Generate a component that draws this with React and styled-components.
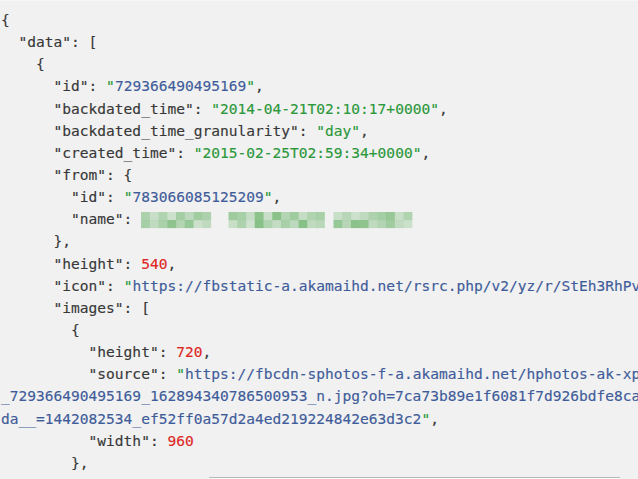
import React from "react"
import styled, { createGlobalStyle } from "styled-components"

const Global = createGlobalStyle`
  html, body {
    margin: 0;
    padding: 0;
    background: #f1f1f1;
  }
  #root {
    width: 638px;
    height: 479px;
  }
`

export const Viewer = styled.main`
  position: relative;
  width: 638px;
  height: 479px;
  overflow: hidden;
  background: #f1f1f1;
  border-top: 1px solid #f7f7f7;
  box-sizing: border-box;
  padding: 8px 0 0 1px;
  font-family: "DejaVu Sans Mono", "Liberation Mono", monospace;
  font-size: 14.55px;
  line-height: 22.15px;
  color: #383838;
  -webkit-text-stroke: 0.15px currentColor;
`

export const Line = styled.div`
  white-space: pre;
  height: 22.15px;
`

export const Str = styled.span`
  color: ${props => (props.blue ? "#3f5c9a" : "#2b983a")};
`

export const Q = styled.span`
  color: #2b983a;
`

export const Num = styled.span`
  color: #de2724;
`

export const Blur = styled.svg`
  display: inline-block;
  vertical-align: -5px;
  width: 272px;
  height: 18px;
`

export const ScrollEdge = styled.div`
  position: absolute;
  left: 209px;
  right: 18px;
  bottom: 1px;
  height: 1px;
  background: #b9b9b9;
  box-shadow: 0 1px 0 #fbfbfb;
`

// pixelated (redacted) name
const cells = (() => {
  const out = []
  let seed = 7
  const rnd = () => {
    seed = (seed * 9301 + 49297) % 233280
    return seed / 233280
  }
  const segments = [
    [0, 8],
    [10, 21],
    [22, 31],
  ]
  segments.forEach(([a, b]) => {
    for (let c = a; c < b; c++) {
      for (let r = 0; r < 2; r++) {
        out.push({ x: c * 8.75, y: r * 8, o: 0.2 + rnd() * 0.5 })
      }
    }
  })
  return out
})()

function BlurredName() {
  return (
    <Blur viewBox="0 0 272 18">
      {cells.map((c, i) => (
        <rect key={i} x={c.x} y={c.y + 1} width="8.85" height="8.1" fill="#58ab58" opacity={c.o} />
      ))}
    </Blur>
  )
}

const S = ({ children, blue }) =>
  blue ? (
    <>
      <Q>"</Q>
      <Str blue>{children}</Str>
      <Q>"</Q>
    </>
  ) : (
    <Str>"{children}"</Str>
  )

export default function App() {
  return (
    <>
      <Global />
      <Viewer>
        <Line>{"{"}</Line>
        <Line>{'  "data": ['}</Line>
        <Line>{"    {"}</Line>
        <Line>
          {'      "id": '}
          <S blue>729366490495169</S>,
        </Line>
        <Line>
          {'      "backdated_time": '}
          <S>2014-04-21T02:10:17+0000</S>,
        </Line>
        <Line>
          {'      "backdated_time_granularity": '}
          <S>day</S>,
        </Line>
        <Line>
          {'      "created_time": '}
          <S>2015-02-25T02:59:34+0000</S>,
        </Line>
        <Line>{'      "from": {'}</Line>
        <Line>
          {'        "id": '}
          <S blue>783066085125209</S>,
        </Line>
        <Line>
          {'        "name": '}
          <BlurredName />
        </Line>
        <Line>{"      },"}</Line>
        <Line>
          {'      "height": '}
          <Num>540</Num>,
        </Line>
        <Line>
          {'      "icon": '}
          <S blue>https://fbstatic-a.akamaihd.net/rsrc.php/v2/yz/r/StEh3RhPvjk.gif</S>,
        </Line>
        <Line>{'      "images": ['}</Line>
        <Line>{"        {"}</Line>
        <Line>
          {'          "height": '}
          <Num>720</Num>,
        </Line>
        <Line>
          {'          "source": '}
          <Q>"</Q>
          <Str blue>https://fbcdn-sphotos-f-a.akamaihd.net/hphotos-ak-xpf1/v/t1.0-9/10440566</Str>
        </Line>
        <Line>
          <Str blue>_729366490495169_162894340786500953_n.jpg?oh=7ca73b89e1f6081f7d926bdfe8ca2b1e&oe=567B0F35&__g</Str>
        </Line>
        <Line>
          <Str blue>da__=1442082534_ef52ff0a57d2a4ed219224842e63d3c2</Str>
          <Q>"</Q>,
        </Line>
        <Line>
          {'          "width": '}
          <Num>960</Num>
        </Line>
        <Line>{"        },"}</Line>
        <ScrollEdge />
      </Viewer>
    </>
  )
}
